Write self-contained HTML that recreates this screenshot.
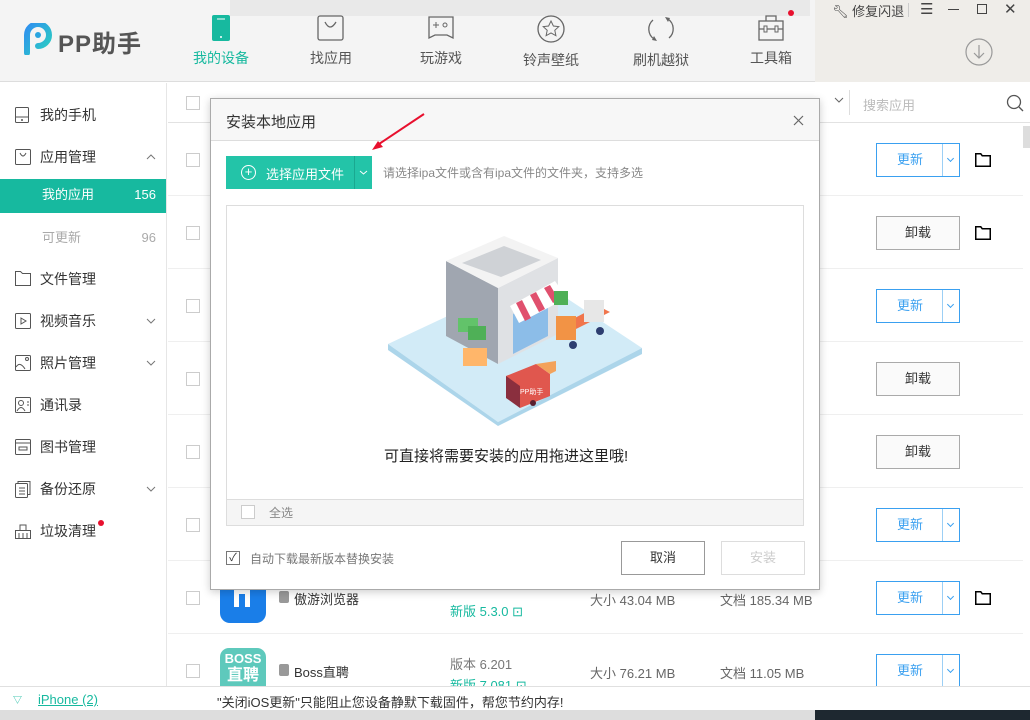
<!DOCTYPE html>
<html><head><meta charset="utf-8"><style>
*{margin:0;padding:0;box-sizing:border-box}
body{width:1030px;height:720px;overflow:hidden;position:relative;background:#fff;font-family:"Liberation Sans","Noto Sans CJK SC",sans-serif;font-size:13px;color:#333}
.abs{position:absolute}
.hdr{left:0;top:0;width:1030px;height:82px;background:#f4f4f4;border-bottom:1px solid #ddd}
.nav{top:14px;width:90px;text-align:center;font-size:14px;color:#555}
.nav svg{display:block;margin:0 auto 6px}
.side{left:0;top:83px;width:167px;height:603px;border-right:1px solid #e6e6e6;background:#fff}
.si{position:absolute;left:0;width:166px;height:42px;font-size:14px;color:#333;line-height:42px;padding-left:40px}
.si svg{position:absolute;left:15px;top:13px}
.si svg.ch{left:auto;right:10px;top:18px}
.row{position:absolute;left:168px;width:855px;height:73px;border-bottom:1px solid #efefef}
.cb{position:absolute;left:18px;width:14px;height:14px;border:1px solid #ccc;background:#fff}
.btn{position:absolute;left:708px;width:84px;height:34px;font-size:13px;text-align:center;line-height:32px;padding-right:0}
.up{border:1px solid #3aa0f0;color:#3aa0f0;background:#fff;padding-right:16px}
.up span{position:absolute;right:0;top:0;width:17px;height:32px;border-left:1px solid #9ccff5}
.up span:after{content:"";position:absolute;left:5px;top:12px;width:4px;height:4px;border-right:1px solid #3aa0f0;border-bottom:1px solid #3aa0f0;transform:rotate(45deg)}
.un{border:1px solid #aaa;color:#333;background:#fafafa}
.fold{position:absolute;left:807px}
</style></head><body>
<div class="abs hdr"></div>
<div class="abs" style="left:230px;top:0;width:580px;height:16px;background:#e9e9e9"></div>
<div class="abs" style="left:815px;top:0;width:215px;height:82px;background:#efede9"></div>
<svg class="abs" style="left:24px;top:23px" width="30" height="32" viewBox="0 0 30 32"><defs><linearGradient id="g" x1="0" y1="0" x2="1" y2="1"><stop offset="0" stop-color="#2f8ff0"/><stop offset="1" stop-color="#2ad0c0"/></linearGradient></defs><path d="M3 30V12A11 11 0 1 1 14 23" fill="none" stroke="url(#g)" stroke-width="6" stroke-linecap="round"/><circle cx="14" cy="12" r="3" fill="#2aa5e0"/></svg>
<div class="abs" style="left:58px;top:24px;font-size:24px;color:#555;font-weight:bold;letter-spacing:1px">PP助手</div>
<div class="abs nav" style="left:176px;color:#17b99f"><svg width="20" height="28"><rect x="1" y="1" width="18" height="26" rx="2" fill="#17b99f"/><line x1="6" y1="5" x2="14" y2="5" stroke="#fff"/><circle cx="10" cy="23" r="1" fill="#fff"/></svg>我的设备</div>
<div class="abs nav" style="left:286px"><svg width="28" height="28"><rect x="1" y="2" width="25" height="24" rx="2" fill="none" stroke="#666" stroke-width="1.3"/><path d="M8 8q5 10 11 0" fill="none" stroke="#666" stroke-width="1.3"/></svg>找应用</div>
<div class="abs nav" style="left:396px"><svg width="28" height="28"><path d="M2 3h24v21l-6-3h-12l-6 3z" fill="none" stroke="#666" stroke-width="1.3"/><path d="M6 11h6M9 8v6" stroke="#666"/><circle cx="18" cy="11" r="2" fill="none" stroke="#666"/></svg>玩游戏</div>
<div class="abs nav" style="left:506px"><svg width="30" height="30"><circle cx="15" cy="15" r="13" fill="none" stroke="#666" stroke-width="1.3"/><path d="M15 7l2.4 5 5.4.6-4 3.7 1.1 5.4-4.9-2.8-4.9 2.8 1.1-5.4-4-3.7 5.4-.6z" fill="none" stroke="#666"/></svg>铃声壁纸</div>
<div class="abs nav" style="left:616px"><svg width="30" height="30"><path d="M22 5a12 12 0 0 1 1 19M8 25a12 12 0 0 1-1-19" fill="none" stroke="#666" stroke-width="1.3"/><path d="M19 3l5 1-2 4zM11 27l-5-1 2-4z" fill="#666"/></svg>刷机越狱</div>
<div class="abs nav" style="left:726px"><svg width="28" height="28"><rect x="2" y="7" width="24" height="19" fill="none" stroke="#666" stroke-width="1.3"/><path d="M9 7V2h10v5M2 15h24" fill="none" stroke="#666" stroke-width="1.3"/><rect x="7" y="12" width="3" height="6" fill="#f4f4f4" stroke="#666"/><rect x="18" y="12" width="3" height="6" fill="#f4f4f4" stroke="#666"/></svg>工具箱</div>
<div class="abs" style="left:788px;top:10px;width:6px;height:6px;border-radius:50%;background:#e8102e"></div>
<div class="abs" style="left:832px;top:1px;font-size:13px;color:#444">🔧︎ 修复闪退</div>
<div class="abs" style="left:908px;top:3px;width:1px;height:14px;background:#ccc"></div>
<div class="abs" style="left:920px;top:0;font-size:15px;color:#444">☰</div>
<div class="abs" style="left:948px;top:9px;width:11px;height:1px;background:#444"></div>
<div class="abs" style="left:977px;top:4px;width:10px;height:10px;border:1.3px solid #444"></div>
<div class="abs" style="left:1004px;top:0;font-size:15px;color:#444">✕</div>
<svg class="abs" style="left:964px;top:37px" width="30" height="30"><circle cx="15" cy="15" r="13" fill="none" stroke="#999" stroke-width="1.2"/><path d="M15 8v13M10 16l5 5 5-5" fill="none" stroke="#999" stroke-width="1.2"/></svg>

<div class="abs side">
<div class="si" style="top:11px"><svg width="14" height="16"><rect x=".5" y=".5" width="13" height="15" rx="1" fill="none" stroke="#555"/><line x1="1" y1="10" x2="13" y2="10" stroke="#555"/><circle cx="7" cy="13" r="1" fill="#555"/></svg>我的手机</div>
<div class="si" style="top:53px"><svg width="16" height="16"><rect x=".5" y=".5" width="15" height="15" rx="1" fill="none" stroke="#555"/><path d="M5 4q3 6 6 0" fill="none" stroke="#555"/></svg>应用管理<svg class="ch" width="10" height="6"><path d="M1 5l4-4 4 4" fill="none" stroke="#777"/></svg></div>
<div class="si" style="top:96px;height:34px;line-height:32px;background:#17b99f;color:#fff;padding-left:42px;font-size:13px">我的应用<span style="position:absolute;right:10px">156</span></div>
<div class="si" style="top:134px;height:40px;color:#aaa;padding-left:42px;font-size:13px">可更新<span style="position:absolute;right:10px">96</span></div>
<div class="si" style="top:175px"><svg width="16" height="15"><path d="M.5 14.5V.5h5l2 2h8v12z" fill="none" stroke="#555"/></svg>文件管理</div>
<div class="si" style="top:217px"><svg width="16" height="16"><rect x=".5" y=".5" width="15" height="15" rx="1" fill="none" stroke="#555"/><path d="M6 5l5 3-5 3z" fill="none" stroke="#555"/></svg>视频音乐<svg class="ch" width="10" height="6"><path d="M1 1l4 4 4-4" fill="none" stroke="#777"/></svg></div>
<div class="si" style="top:259px"><svg width="16" height="16"><rect x=".5" y=".5" width="15" height="15" rx="1" fill="none" stroke="#555"/><path d="M1 12q4-6 9 2" fill="none" stroke="#555"/><circle cx="12" cy="4" r="1.5" fill="none" stroke="#555"/></svg>照片管理<svg class="ch" width="10" height="6"><path d="M1 1l4 4 4-4" fill="none" stroke="#777"/></svg></div>
<div class="si" style="top:301px"><svg width="16" height="16"><rect x=".5" y=".5" width="15" height="15" rx="1" fill="none" stroke="#555"/><circle cx="6" cy="6" r="2.5" fill="none" stroke="#555"/><path d="M2 14q4-7 8 0M12 5h2M12 8h2" fill="none" stroke="#555"/></svg>通讯录</div>
<div class="si" style="top:343px"><svg width="16" height="16"><rect x=".5" y=".5" width="15" height="15" rx="1" fill="none" stroke="#555"/><path d="M1 4h14" stroke="#555"/><rect x="4" y="8" width="8" height="3" fill="none" stroke="#555"/></svg>图书管理</div>
<div class="si" style="top:385px"><svg width="16" height="17"><rect x=".5" y="2.5" width="12" height="14" rx="1" fill="none" stroke="#555"/><path d="M3 2V.5h12v13h-2M4 7h6M4 10h6M4 13h6" fill="none" stroke="#555"/></svg>备份还原<svg class="ch" width="10" height="6"><path d="M1 1l4 4 4-4" fill="none" stroke="#777"/></svg></div>
<div class="si" style="top:427px"><svg width="16" height="16"><path d="M.5 7.5h15v8h-15zM5 7V2h6v5M4 10v5M8 10v5M12 10v5" fill="none" stroke="#555"/></svg>垃圾清理</div>
<div class="abs" style="left:98px;top:437px;width:6px;height:6px;border-radius:50%;background:#e8102e"></div>
</div>

<div class="abs" style="left:168px;top:83px;width:862px;height:40px;border-bottom:1px solid #e2e2e2;background:#fff"></div>
<div class="abs cb" style="left:186px;top:96px"></div>
<div class="abs" style="left:849px;top:90px;width:1px;height:25px;background:#ddd"></div>
<svg class="abs" style="left:834px;top:97px" width="10" height="6"><path d="M1 1l4 4 4-4" fill="none" stroke="#666"/></svg>
<div class="abs" style="left:863px;top:95px;color:#bbb;font-size:13px">搜索应用</div>
<svg class="abs" style="left:1006px;top:94px" width="18" height="18"><circle cx="8" cy="8" r="6.5" fill="none" stroke="#555" stroke-width="1.3"/><path d="M13 13l4 4" stroke="#555" stroke-width="1.3"/></svg>
<div class="abs" style="left:1023px;top:126px;width:7px;height:22px;background:#ddd"></div>

<div class="row" style="top:123px"><div class="cb" style="top:30px"></div><div class="btn up" style="top:20px">更新<span></span></div><svg class="fold" style="top:30px" width="16" height="14"><path d="M.75 13.25V.75h5l1.5 2h8v10.5z" fill="none" stroke="#000" stroke-width="1.5"/></svg></div>
<div class="row" style="top:196px"><div class="cb" style="top:30px"></div><div class="btn un" style="top:20px">卸载</div><svg class="fold" style="top:30px" width="16" height="14"><path d="M.75 13.25V.75h5l1.5 2h8v10.5z" fill="none" stroke="#000" stroke-width="1.5"/></svg></div>
<div class="row" style="top:269px"><div class="cb" style="top:30px"></div><div class="btn up" style="top:20px">更新<span></span></div></div>
<div class="row" style="top:342px"><div class="cb" style="top:30px"></div><div class="btn un" style="top:20px">卸载</div></div>
<div class="row" style="top:415px"><div class="cb" style="top:30px"></div><div class="btn un" style="top:20px">卸载</div></div>
<div class="row" style="top:488px"><div class="cb" style="top:30px"></div><div class="btn up" style="top:20px">更新<span></span></div></div>
<div class="row" style="top:561px"><div class="cb" style="top:30px"></div>
<div style="position:absolute;left:52px;top:20px;width:46px;height:42px;border-radius:0 0 10px 10px;background:#1a7ee8"></div>
<div style="position:absolute;left:66px;top:28px;width:16px;height:18px;border:5px solid #fff;border-bottom:none"></div>
<div style="position:absolute;left:111px;top:30px;width:10px;height:12px;background:#999;border-radius:2px"></div>
<div style="position:absolute;left:126px;top:28px;font-size:13px">傲游浏览器</div>
<div style="position:absolute;left:282px;top:40px;color:#17b99f;font-size:13px">新版 5.3.0 ⊡</div>
<div style="position:absolute;left:422px;top:29px;color:#666">大小 43.04 MB</div>
<div style="position:absolute;left:552px;top:29px;color:#666">文档 185.34 MB</div>
<div class="btn up" style="top:20px">更新<span></span></div><svg class="fold" style="top:30px" width="16" height="14"><path d="M.75 13.25V.75h5l1.5 2h8v10.5z" fill="none" stroke="#000" stroke-width="1.5"/></svg></div>
<div class="row" style="top:634px"><div class="cb" style="top:30px"></div>
<div style="position:absolute;left:52px;top:14px;width:46px;height:50px;border-radius:9px;background:#5ec9bc;color:#fff;font-weight:bold;text-align:center;font-size:13px;line-height:17px;padding-top:2px">BOSS<br><span style="font-size:16px">直聘</span></div>
<div style="position:absolute;left:111px;top:30px;width:10px;height:12px;background:#999;border-radius:2px"></div>
<div style="position:absolute;left:126px;top:28px;font-size:13px">Boss直聘</div>
<div style="position:absolute;left:282px;top:20px;color:#777">版本 6.201</div>
<div style="position:absolute;left:282px;top:41px;color:#17b99f">新版 7.081 ⊡</div>
<div style="position:absolute;left:422px;top:29px;color:#666">大小 76.21 MB</div>
<div style="position:absolute;left:552px;top:29px;color:#666">文档 11.05 MB</div>
<div class="btn up" style="top:20px">更新<span></span></div></div>

<div class="abs" style="left:0;top:686px;width:1030px;height:24px;background:#fff;border-top:1px solid #e0e0e0"></div>
<div class="abs" style="left:13px;top:693px;font-size:9px;color:#17b99f">▽</div>
<div class="abs" style="left:38px;top:692px;color:#17b99f;text-decoration:underline">iPhone (2)</div>
<div class="abs" style="left:217px;top:692px;color:#333">"关闭iOS更新"只能阻止您设备静默下载固件，帮您节约内存!</div>
<div class="abs" style="left:0;top:710px;width:1030px;height:10px;background:#ddd"></div>
<div class="abs" style="left:815px;top:710px;width:215px;height:10px;background:#1e2830"></div>

<div class="abs" style="left:210px;top:98px;width:610px;height:492px;background:#fff;border:1px solid #aaa;box-shadow:0 2px 8px rgba(0,0,0,.2)">
<div style="position:absolute;left:0;top:0;width:608px;height:42px;background:#f7f7f7;border-bottom:1px solid #ddd"></div>
<div style="position:absolute;left:15px;top:12px;font-size:15px;color:#333">安装本地应用</div>
<svg style="position:absolute;left:582px;top:16px" width="11" height="11"><path d="M1 1l9 9M10 1l-9 9" stroke="#666" stroke-width="1.2"/></svg>
<div style="position:absolute;left:15px;top:57px;width:146px;height:33px;background:#23c4a8"></div>
<div style="position:absolute;left:143px;top:57px;width:1px;height:33px;background:#1aa890"></div>
<div style="position:absolute;left:30px;top:66px;width:15px;height:15px;border:1.3px solid #fff;border-radius:50%;color:#fff;font-size:13px;line-height:12px;text-align:center">+</div>
<div style="position:absolute;left:55px;top:65px;color:#fff;font-size:13px">选择应用文件</div>
<svg style="position:absolute;left:148px;top:71px" width="9" height="5"><path d="M1 1l3.5 3 3.5-3" fill="none" stroke="#fff"/></svg>
<div style="position:absolute;left:172px;top:65px;color:#888;font-size:12px">请选择ipa文件或含有ipa文件的文件夹，支持多选</div>
<div style="position:absolute;left:15px;top:106px;width:578px;height:321px;border:1px solid #ddd"></div>
<div style="position:absolute;left:16px;top:400px;width:576px;height:26px;background:#f5f5f5;border-top:1px solid #ddd"></div>
<div style="position:absolute;left:30px;top:406px;width:14px;height:14px;border:1px solid #ccc;background:#fff"></div>
<div style="position:absolute;left:58px;top:405px;color:#888;font-size:12px">全选</div>
<div style="position:absolute;left:173px;top:346px;font-size:15px;color:#222">可直接将需要安装的应用拖进这里哦!</div>
<div style="position:absolute;left:15px;top:452px;width:14px;height:14px;border:1px solid #777;font-size:11px;line-height:12px;text-align:center">✓</div>
<div style="position:absolute;left:39px;top:451px;color:#777;font-size:12px">自动下载最新版本替换安装</div>
<div style="position:absolute;left:410px;top:442px;width:84px;height:34px;border:1px solid #999;text-align:center;line-height:32px;color:#333">取消</div>
<div style="position:absolute;left:510px;top:442px;width:84px;height:34px;border:1px solid #ddd;text-align:center;line-height:32px;color:#ccc">安装</div>
</div>
<svg class="abs" style="left:388px;top:236px" width="254" height="190" viewBox="0 0 254 190">
<path d="M0 108L145 40 254 112 110 186z" fill="#d2ebf7"/><path d="M0 108v6l110 76v-4zM110 186l144-74v6L110 190z" fill="#acd5ea"/>
<path d="M58 25L110 52v76L58 100z" fill="#a0a6b0"/><path d="M110 52l60-30v76l-60 30z" fill="#dfe1e4"/><path d="M58 25L116 0l54 22-60 30z" fill="#f3f3f3"/>
<path d="M74 27l42-17 37 14-40 17z" fill="#cfd2d6"/>
<path d="M125 78l35-18v40l-35 18z" fill="#8cbde8"/>
<path d="M122 70l45-25 12 17-48 25z" fill="#fff"/><path d="M128 67l6-3 9 18-6 3zM142 59l6-3 9 17-6 3zM156 52l6-3 9 15-6 3z" fill="#e0506e"/>
<rect x="75" y="112" width="24" height="18" fill="#ffb66a"/><rect x="70" y="82" width="20" height="14" fill="#62c36a"/><rect x="80" y="90" width="18" height="14" fill="#4fb057"/>
<path d="M175 88l35-18 12 6-36 18z" fill="#f0754c"/><rect x="168" y="80" width="20" height="24" fill="#f29345"/><rect x="196" y="64" width="20" height="22" fill="#e7e7e7"/>
<rect x="166" y="55" width="14" height="14" fill="#4fb057"/><circle cx="185" cy="109" r="4" fill="#2d3d70"/><circle cx="212" cy="95" r="4" fill="#2d3d70"/>
<path d="M118 140l30-12 14 10v22l-30 12z" fill="#e0574e"/><path d="M118 140l14 10v22l-14-10z" fill="#8a2f3e"/><path d="M148 128l14 10 6-3v-10z" fill="#f3a25b"/>
<text x="132" y="158" font-size="7" fill="#fff" font-family="Liberation Sans">PP助手</text><circle cx="145" cy="167" r="3" fill="#5a2030"/>
</svg>
<svg class="abs" style="left:368px;top:110px" width="62" height="50"><path d="M56 4L8 36" stroke="#e8102e" stroke-width="2"/><path d="M4 40l11-3-5-6z" fill="#e8102e"/></svg>
</body></html>
